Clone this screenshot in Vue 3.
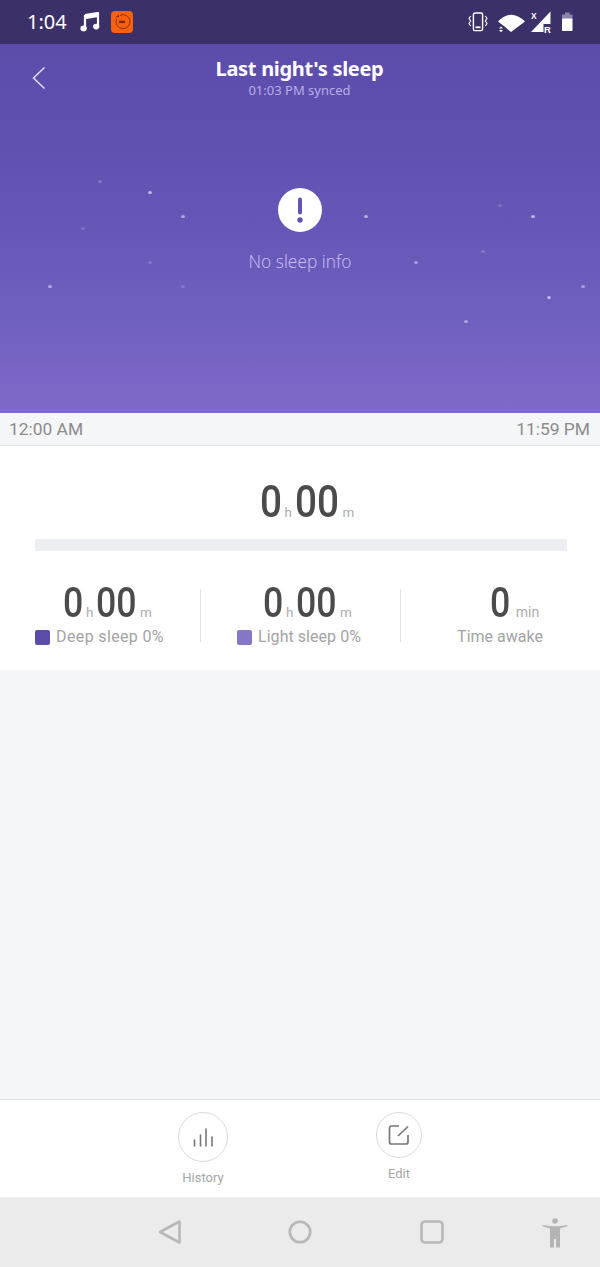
<script setup>
const stars = [
  { x: 100, y: 181, o: 0.25 }, { x: 150, y: 192, o: 0.7 }, { x: 183, y: 216, o: 0.6 },
  { x: 83, y: 228, o: 0.2 }, { x: 150, y: 262, o: 0.2 }, { x: 50, y: 286, o: 0.6 },
  { x: 183, y: 286, o: 0.2 }, { x: 366, y: 216, o: 0.65 }, { x: 533, y: 216, o: 0.7 },
  { x: 500, y: 205, o: 0.2 }, { x: 483, y: 251, o: 0.25 }, { x: 416, y: 262, o: 0.5 },
  { x: 583, y: 286, o: 0.5 }, { x: 549, y: 297, o: 0.7 }, { x: 466, y: 321, o: 0.55 }
]
const starStyle = (s) => ({ left: s.x - 2 + 'px', top: s.y - 44 - 1.5 + 'px', opacity: s.o })
</script>

<template>
  <div class="phone">
    <header class="status">
      <div class="status-left">
        <span class="clock">1:04</span>
        <svg class="music" width="20" height="20" viewBox="0 0 20 20">
          <path d="M5 3.2 L18 1 V14.5" fill="none" stroke="#fff" stroke-width="2.2" stroke-linejoin="round"/>
          <path d="M5 3 V16" fill="none" stroke="#fff" stroke-width="2.2"/>
          <path d="M5 3.2 L18 1 V5 L5 7.2 Z" fill="#fff"/>
          <ellipse cx="3.6" cy="16.4" rx="3.2" ry="2.8" fill="#fff"/>
          <ellipse cx="16.2" cy="14.6" rx="3.1" ry="2.8" fill="#fff"/>
        </svg>
        <svg class="app-icon" width="22" height="22" viewBox="0 0 22 22">
          <rect width="22" height="22" rx="4" fill="#f9600f"/>
          <path d="M5.5 8 A7 7 0 1 0 9 4.3" fill="none" stroke="#7c2d08" stroke-width="0.9"/>
          <path d="M4.5 6.5 L8 3.5 L8 6 Z" fill="#7c2d08"/>
          <rect x="8" y="9.7" width="6" height="2.4" fill="#7c2d08"/>
        </svg>
      </div>
      <div class="status-right">
        <svg width="20" height="20" viewBox="0 0 20 20">
          <rect x="5.4" y="1" width="9.2" height="17.6" rx="1.6" fill="none" stroke="#fff" stroke-width="1.4"/>
          <rect x="7.5" y="14.4" width="5" height="1.8" fill="#fff"/>
          <path d="M2.6 4 L1 6.5 L2.6 9 L1 11.5 L2.6 14 M17.4 4 L19 6.5 L17.4 9 L19 11.5 L17.4 14" fill="none" stroke="#fff" stroke-width="1.1"/>
        </svg>
        <svg class="wifi" width="28" height="22" viewBox="0 0 28 22">
          <path d="M1 10.5 Q14 -3 28 10.5 L14 21 L7.5 15.5 Z" fill="#fff"/>
          <path d="M2 17.6 L4 15.4 L6 17.6 Z M2 19 L6 19 L4 21.2 Z" fill="#fff"/>
        </svg>
        <svg class="cell" width="21" height="22" viewBox="0 0 21 22">
          <path d="M19.5 0.5 V21 H0 Z" fill="#fff"/>
          <rect x="12.5" y="13" width="8.5" height="9" fill="#3c3068"/>
          <text x="13" y="21.5" class="cell-r">R</text>
          <text x="0" y="7.5" class="cell-x">X</text>
        </svg>
        <svg class="battery" width="11" height="20" viewBox="0 0 11 20">
          <path d="M3 0.5 H7.5 V2.5 H10.5 V7 H0 V2.5 H3 Z" fill="#8d83ad"/>
          <rect x="0" y="6.5" width="10.5" height="12.5" rx="0.8" fill="#fff"/>
        </svg>
      </div>
    </header>

    <section class="hero">
      <span v-for="(s, i) in stars" :key="i" class="star" :style="starStyle(s)"></span>
      <div class="topbar">
        <svg class="back" width="14" height="24" viewBox="0 0 14 24">
          <path d="M12.5 1.5 L1.5 12 L12.5 22.5" fill="none" stroke="#e4def5" stroke-width="1.5"/>
        </svg>
        <h1 class="title">Last night's sleep</h1>
        <p class="synced">01:03 PM synced</p>
      </div>
      <div class="empty">
        <svg width="44" height="44" viewBox="0 0 44 44">
          <circle cx="22" cy="22" r="22" fill="#fff"/>
          <rect x="20" y="9.5" width="4" height="17" rx="2" fill="#6352b4"/>
          <circle cx="22" cy="32" r="2.7" fill="#6352b4"/>
        </svg>
        <p class="empty-text">No sleep info</p>
      </div>
    </section>

    <div class="range">
      <span>12:00 AM</span>
      <span>11:59 PM</span>
    </div>

    <section class="summary">
      <div class="total">
        <span class="big one">0</span><span class="unit u-h">h</span><span class="big two">00</span><span class="unit u-m">m</span>
      </div>
      <div class="track"></div>
      <div class="stats">
        <div class="stat">
          <div class="value">
            <span class="mid one">0</span><span class="unit u-h">h</span><span class="mid two">00</span><span class="unit u-m">m</span>
          </div>
          <div class="label deep-label"><i class="swatch deep"></i>Deep sleep 0%</div>
        </div>
        <div class="stat">
          <div class="value">
            <span class="mid one">0</span><span class="unit u-h">h</span><span class="mid two">00</span><span class="unit u-m">m</span>
          </div>
          <div class="label light-label"><i class="swatch light"></i>Light sleep 0%</div>
        </div>
        <div class="stat">
          <div class="value awake">
            <span class="mid one">0</span><span class="unit u-min">min</span>
          </div>
          <div class="label">Time awake</div>
        </div>
      </div>
    </section>

    <main class="filler"></main>

    <footer class="actions">
      <div class="action history">
        <span class="ring r-50">
          <svg width="24" height="24" viewBox="0 0 24 24">
            <path d="M3.5 15 V21 M9.5 10 V21 M15 4 V21 M21 12 V21" fill="none" stroke="#777" stroke-width="1.6" stroke-linecap="round"/>
          </svg>
        </span>
        <span class="action-label">History</span>
      </div>
      <div class="action edit">
        <span class="ring r-46">
          <svg width="22" height="22" viewBox="0 0 22 22">
            <path d="M11 2 H3.5 A2 2 0 0 0 1.5 4 V18 A2 2 0 0 0 3.5 20 H18 A2 2 0 0 0 20 18 V11" fill="none" stroke="#777" stroke-width="1.7"/>
            <path d="M10 12 L20 2.5" fill="none" stroke="#777" stroke-width="1.7"/>
          </svg>
        </span>
        <span class="action-label">Edit</span>
      </div>
    </footer>

    <nav class="navbar">
      <svg class="nav-back" width="24" height="24" viewBox="0 0 24 24">
        <path d="M2 12 L21.5 1.5 V22.5 Z" fill="none" stroke="#b8b8b8" stroke-width="2.6" stroke-linejoin="round"/>
      </svg>
      <svg class="nav-home" width="24" height="24" viewBox="0 0 24 24">
        <circle cx="12" cy="12" r="10.2" fill="none" stroke="#b8b8b8" stroke-width="2.6"/>
      </svg>
      <svg class="nav-recent" width="24" height="24" viewBox="0 0 24 24">
        <rect x="1.5" y="1.5" width="21" height="21" rx="3.5" fill="none" stroke="#b8b8b8" stroke-width="2.6"/>
      </svg>
      <svg class="nav-a11y" width="26" height="30" viewBox="0 0 26 30">
        <circle cx="13" cy="3" r="2.8" fill="#b4b4b4"/>
        <path d="M0.5 7 L9 8.3 H17 L25.5 7 L25.5 8.3 L18 10.5 V29.5 H14 V21 H12 V29.5 H8 V10.5 L0.5 8.3 Z" fill="#b4b4b4"/>
      </svg>
    </nav>
  </div>
</template>

<style>
html, body { margin: 0; background: #f5f6f8; }
</style>

<style scoped>
.phone {
  width: 600px;
  height: 1267px;
  display: flex;
  flex-direction: column;
  font-family: "Roboto", "Liberation Sans", sans-serif;
  overflow: hidden;
}
.status {
  height: 44px;
  flex: none;
  background: #3c3068;
  display: flex;
  align-items: center;
  justify-content: space-between;
  padding: 0 27px 0 27px;
  box-sizing: border-box;
  color: #fff;
}
.status-left, .status-right { display: flex; align-items: center; }
.clock { font-size: 20px; font-family: "Noto Sans", sans-serif; margin-right: 13px; line-height: 44px; }
.app-icon { margin-left: 11px; }
.wifi { margin-left: 9px; }
.cell { margin-left: 6px; }
.battery { margin-left: 10px; }
.cell-r { font: 700 9.5px "Liberation Sans", sans-serif; fill: #fff; }
.cell-x { font: 700 8.5px "Liberation Sans", sans-serif; fill: #fff; }

.hero {
  position: relative;
  height: 369px;
  flex: none;
  background: linear-gradient(180deg, #5c4dab 0%, #5f50b0 25%, #6656b8 50%, #7060bf 75%, #7f69c9 100%);
}
.star {
  position: absolute;
  width: 4px;
  height: 3px;
  border-radius: 50%;
  background: #e4e0f8;
  filter: blur(0.5px);
}
.topbar {
  position: relative;
  text-align: center;
  padding: 12px 1px 0 0;
}
.back { position: absolute; left: 32px; top: 22px; }
.title {
  margin: 0;
  font: 700 20px/26px "Noto Sans", sans-serif;
  letter-spacing: -0.3px;
  color: #fff;
}
.synced {
  margin: 0;
  font: 400 13px/17px "Noto Sans", sans-serif;
  color: #b9aee6;
}
.empty {
  position: absolute;
  left: 0;
  right: 0;
  top: 144px;
  display: flex;
  flex-direction: column;
  align-items: center;
}
.empty-text {
  margin: 17px 0 0;
  font: 300 17.4px/24px "Open Sans", sans-serif;
  color: #cbc3f2;
}

.range {
  height: 33px;
  flex: none;
  box-sizing: border-box;
  background: #f5f6f8;
  border-bottom: 1px solid #e1e2e5;
  display: flex;
  align-items: center;
  justify-content: space-between;
  padding: 0 10px 1px 9px;
  font-size: 17.4px;
  color: #8b8b8d;
}

.summary {
  height: 224px;
  flex: none;
  background: #fff;
  box-sizing: border-box;
  padding-top: 31px;
}
.total {
  display: flex;
  justify-content: center;
  align-items: baseline;
  height: 50px;
  color: #4b4b4b;
  padding-left: 14px;
}
.big, .mid {
  display: inline-block;
  font-weight: 500;
  transform-origin: left center;
  white-space: nowrap;
}
.big { font-size: 45px; line-height: 50px; transform: scaleX(0.86); }
.mid { font-size: 42px; line-height: 46px; transform: scaleX(0.85); }
.big.one { width: 22px; }
.big.two { width: 44px; }
.mid.one { width: 20px; }
.mid.two { width: 40px; }
.unit { font-size: 13.5px; color: #adadad; }
.u-h { margin: 0 3px; width: 7px; }
.u-m { margin-left: 4px; }
.u-min { margin-left: 6px; font-size: 14px; }
.track {
  height: 12px;
  margin: 12px 33px 0 35px;
  background: #eceef1;
}
.stats {
  display: flex;
  margin-top: 38px;
}
.stat {
  flex: none;
  width: 200px;
  height: 53px;
  position: relative;
  display: flex;
  flex-direction: column;
  align-items: center;
}
.stat + .stat::before {
  content: "";
  position: absolute;
  left: 0;
  top: 0;
  width: 1px;
  height: 53px;
  background: #e2e3e5;
}
.value {
  display: flex;
  align-items: baseline;
  height: 24px;
  color: #4b4b4b;
  margin-top: -9px;
  margin-bottom: 12px;
  padding-left: 15px;
}
.value.awake { padding-left: 29px; }
.label {
  display: flex;
  align-items: center;
  font-size: 16px;
  line-height: 24px;
  color: #a3a3a5;
  margin-top: 9px;
}
.deep-label { letter-spacing: 0.35px; padding-right: 1px; }
.light-label { letter-spacing: 0.05px; padding-right: 2px; }
.swatch {
  width: 15px;
  height: 15px;
  border-radius: 2px;
  margin-right: 6px;
}
.deep { background: #5c4dab; }
.light { background: #8776c6; }

.filler {
  flex: 1;
  background: #f5f6f8;
}

.actions {
  height: 98px;
  flex: none;
  box-sizing: border-box;
  background: #fff;
  border-top: 1px solid #dfe0e2;
  position: relative;
}
.action {
  position: absolute;
  display: flex;
  flex-direction: column;
  align-items: center;
  font-size: 13px;
  color: #a5a5a5;
}
.history { left: 153px; width: 100px; top: 12px; }
.edit { left: 349px; width: 100px; top: 12px; }
.ring {
  box-sizing: border-box;
  border: 1px solid #dadadc;
  border-radius: 50%;
  display: flex;
  align-items: center;
  justify-content: center;
}
.r-50 { width: 50px; height: 50px; }
.r-46 { width: 46px; height: 46px; }
.action-label { margin-top: 7px; line-height: 18px; }

.navbar {
  height: 70px;
  flex: none;
  background: #ebebeb;
  position: relative;
}
.navbar svg { position: absolute; }
.nav-back { left: 158px; top: 23px; }
.nav-home { left: 288px; top: 23px; }
.nav-recent { left: 420px; top: 23px; }
.nav-a11y { left: 542px; top: 21px; }
</style>
